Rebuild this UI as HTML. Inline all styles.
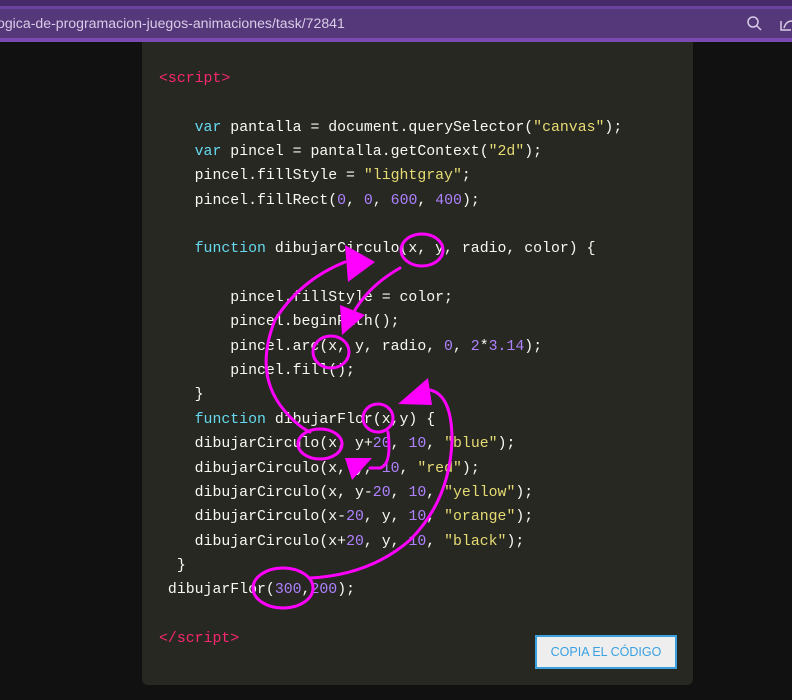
<!DOCTYPE html>
<html><head><meta charset="utf-8"><style>
html,body{margin:0;padding:0;width:792px;height:700px;overflow:hidden;background:#111;font-family:"Liberation Sans",sans-serif}
.top{position:absolute;left:0;top:0;width:792px;height:6px;background:#472a6a}
.l1{position:absolute;left:0;top:6px;width:792px;height:3px;background:#6a43a0}
.bar{position:absolute;left:0;top:9px;width:792px;height:29px;background:#55387a;color:#d8cce6;font-size:14.1px;line-height:29px;text-indent:-3px}
.l2{position:absolute;left:0;top:38px;width:792px;height:4px;background:#7a4ab0}
.panel{position:absolute;left:142px;top:42px;width:551px;height:643px;background:#272822;border-radius:0 0 6px 6px}
pre{position:absolute;left:159px;top:67px;margin:0;font-family:"Liberation Mono",monospace;font-size:14.85px;line-height:24.35px;color:#f8f8f2}
.t{color:#f92672}.k{color:#66d9ef}.s{color:#e6db74}.n{color:#ae81ff}
.btn{position:absolute;left:535px;top:635px;width:138px;height:30px;border:2px solid #3aa0e0;background:#eeeeee;color:#3aa0e0;font-size:12.5px;line-height:30px;text-align:center}
svg{position:absolute;left:0;top:0}
</style></head><body>
<div class="top"></div><div class="l1"></div>
<div class="bar">ogica-de-programacion-juegos-animaciones/task/72841
<svg width="792" height="38" style="position:absolute;left:0;top:0"><circle cx="753" cy="13" r="5" fill="none" stroke="#d8cce6" stroke-width="1.5"/><line x1="757" y1="17" x2="761" y2="21" stroke="#d8cce6" stroke-width="1.5"/><path d="M781 12 v9 h10" fill="none" stroke="#d8cce6" stroke-width="1.5"/><path d="M784 19 q2 -7 8 -7" fill="none" stroke="#d8cce6" stroke-width="1.5"/></svg></div>
<div class="l2"></div>
<div class="panel"></div>
<pre><span class="t">&lt;script&gt;</span>

    <span class="k">var</span> pantalla = document.querySelector(<span class="s">"canvas"</span>);
    <span class="k">var</span> pincel = pantalla.getContext(<span class="s">"2d"</span>);
    pincel.fillStyle = <span class="s">"lightgray"</span>;
    pincel.fillRect(<span class="n">0</span>, <span class="n">0</span>, <span class="n">600</span>, <span class="n">400</span>);

    <span class="k">function</span> dibujarCirculo(x, y, radio, color) {

        pincel.fillStyle = color;
        pincel.beginPath();
        pincel.arc(x, y, radio, <span class="n">0</span>, <span class="n">2</span>*<span class="n">3.14</span>);
        pincel.fill();
    }
    <span class="k">function</span> dibujarFlor(x,y) {
    dibujarCirculo(x, y+<span class="n">20</span>, <span class="n">10</span>, <span class="s">"blue"</span>);
    dibujarCirculo(x, y, <span class="n">10</span>, <span class="s">"red"</span>);
    dibujarCirculo(x, y-<span class="n">20</span>, <span class="n">10</span>, <span class="s">"yellow"</span>);
    dibujarCirculo(x-<span class="n">20</span>, y, <span class="n">10</span>, <span class="s">"orange"</span>);
    dibujarCirculo(x+<span class="n">20</span>, y, <span class="n">10</span>, <span class="s">"black"</span>);
  }
 dibujarFlor(<span class="n">300</span>,<span class="n">200</span>);

<span class="t">&lt;/script&gt;</span></pre>
<div class="btn">COPIA EL CÓDIGO</div>
<svg width="792" height="700"><g fill="none" stroke="#ff00ff" stroke-width="3" stroke-linecap="round">
<ellipse cx="422" cy="250" rx="21" ry="16"/>
<ellipse cx="331" cy="352" rx="18" ry="16"/>
<ellipse cx="378" cy="418" rx="15" ry="14"/>
<ellipse cx="320" cy="444" rx="22" ry="15"/>
<ellipse cx="283" cy="588" rx="30" ry="20"/>
<path d="M400 268 Q370 285 355 310"/>
<path d="M345 262 Q300 280 275 320 Q255 370 280 405 Q295 425 310 432"/>
<path d="M388 432 Q392 465 380 468 L370 468"/>
<path d="M430 390 Q452 395 452 440 Q450 500 410 540 Q370 575 310 578"/>
</g>
<g fill="#ff00ff"><polygon points="345,245 375,262 348,282"/><polygon points="340,305 365,315 342,335"/><polygon points="345,458 372,458 352,480"/><polygon points="398,404 428,378 432,405"/></g></svg>
</body></html>
